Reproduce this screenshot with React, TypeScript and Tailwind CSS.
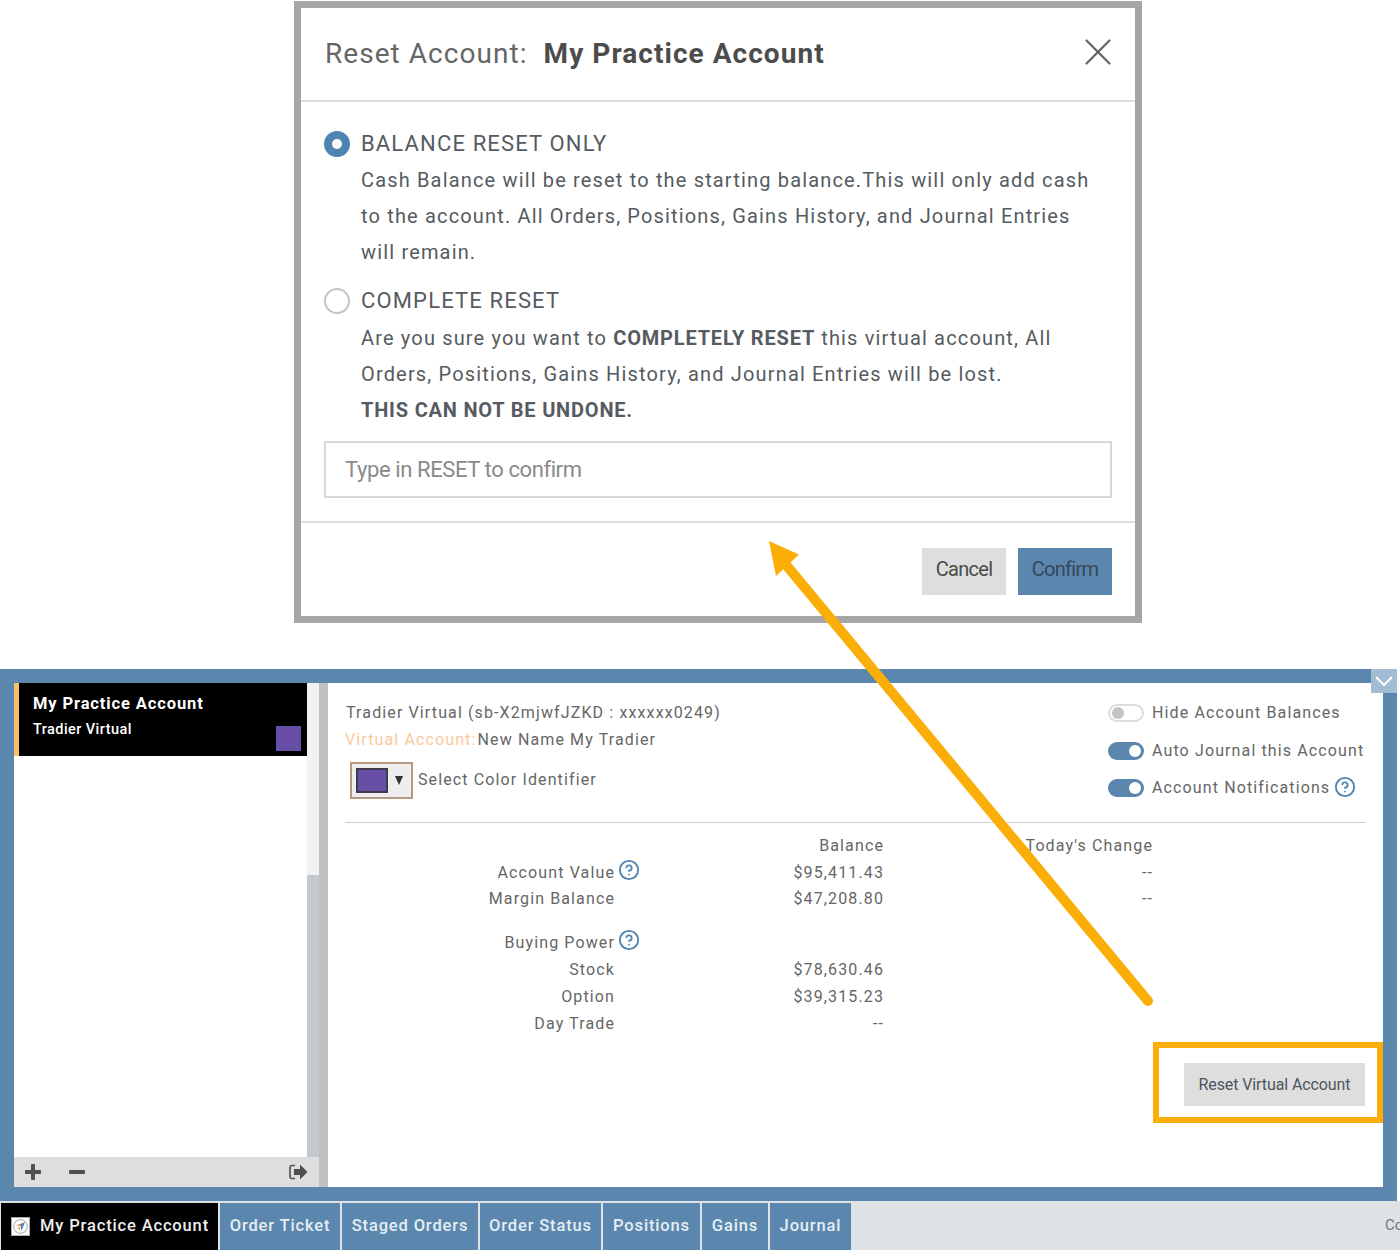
import { HelpCircle, X } from "lucide-react";

const rows = [
  { label: "Account Value", help: true, balance: "$95,411.43", change: "--", h: "h-[27px]" },
  { label: "Margin Balance", balance: "$47,208.80", change: "--", h: "h-[43px] pb-[17px]" },
  { label: "Buying Power", help: true, balance: "", change: "", h: "h-[27px]" },
  { label: "Stock", balance: "$78,630.46", change: "", h: "h-[27px]" },
  { label: "Option", balance: "$39,315.23", change: "", h: "h-[27px]" },
  { label: "Day Trade", balance: "--", change: "", h: "h-[27px]" },
];

const tabs = [
  { name: "Order Ticket", w: "w-[120px]" },
  { name: "Staged Orders", w: "w-[136px]" },
  { name: "Order Status", w: "w-[121px]" },
  { name: "Positions", w: "w-[97px]" },
  { name: "Gains", w: "w-[66px]" },
  { name: "Journal", w: "w-[81px]" },
];

function Toggle({ on }: { on: boolean }) {
  return on ? (
    <span className="flex h-[18px] w-[36px] shrink-0 items-center justify-end rounded-full bg-[#5b87ae] pr-[3px]">
      <span className="h-[12px] w-[12px] rounded-full bg-white" />
    </span>
  ) : (
    <span className="flex h-[18px] w-[36px] shrink-0 items-center rounded-full border-2 border-[#dcdcdc] bg-white pl-[2px]">
      <span className="h-[12px] w-[12px] rounded-full bg-[#c4c4c4]" />
    </span>
  );
}

function Modal() {
  return (
    <div className="ml-[294px] mt-[1px] flex h-[622px] w-[848px] flex-col border-[7px] border-[#a6a6a6] bg-white text-[#555b60]">
      <div className="flex h-[94px] shrink-0 items-center justify-between border-b-2 border-[#dcdcdc] pl-[24px] pr-[14px]">
        <div className="pb-[1px] text-[28px] tracking-[1.05px] text-[#666]">
          Reset Account:&nbsp; <span className="font-bold text-[#4c4c4c]">My Practice Account</span>
        </div>
        <X className="-mt-[4px] h-[46px] w-[46px] text-[#666]" strokeWidth={1.2} />
      </div>
      <div className="flex h-[421px] shrink-0 flex-col border-b-2 border-[#dcdcdc] px-[23px] pt-[27px]">
        <div className="flex items-center gap-[11px]">
          <span className="flex h-[26px] w-[26px] items-center justify-center rounded-full bg-[#4f83b0]">
            <span className="h-[10px] w-[10px] rounded-full bg-white" />
          </span>
          <span className="text-[22px] leading-[30px] tracking-[1.15px]">BALANCE RESET ONLY</span>
        </div>
        <p className="ml-[37px] mt-[3px] w-[735px] text-[20px] leading-[36px] tracking-[1.16px]">
          Cash Balance will be reset to the starting balance.This will only add cash to the account. All Orders,
          Positions, Gains History, and Journal Entries will remain.
        </p>
        <div className="mt-[16px] flex items-center gap-[11px]">
          <span className="h-[26px] w-[26px] rounded-full border-2 border-[#c4c4c4] bg-white" />
          <span className="text-[22px] leading-[30px] tracking-[1.15px]">COMPLETE RESET</span>
        </div>
        <p className="ml-[37px] mt-[4px] w-[735px] text-[20px] leading-[36px] tracking-[1.16px]">
          Are you sure you want to <b className="tracking-[0.8px]">COMPLETELY RESET</b> this virtual account, All
          Orders, Positions, Gains History, and Journal Entries will be lost.
          <br />
          <b className="tracking-[0.8px]">THIS CAN NOT BE UNDONE.</b>
        </p>
        <div className="mt-[13px] flex h-[57px] w-[788px] shrink-0 items-center border-2 border-[#d5d8dc] pl-[19px] text-[22px] tracking-[-0.4px] text-[#8a8a8a]">
          Type in RESET to confirm
        </div>
      </div>
      <div className="flex flex-1 items-start justify-end gap-[12px] pr-[23px] pt-[25px]">
        <div className="flex h-[47px] w-[84px] items-center justify-center bg-[#dedede] pb-[5px] text-[20px] tracking-[-0.7px] text-[#4a4a4a]">
          Cancel
        </div>
        <div className="flex h-[47px] w-[94px] items-center justify-center bg-[#5b87ae] pb-[5px] text-[20px] tracking-[-0.7px] text-[#38485a]">
          Confirm
        </div>
      </div>
    </div>
  );
}

function Sidebar() {
  return (
    <div className="flex w-[314px] shrink-0 flex-col">
      <div className="flex min-h-0 flex-1">
        <div className="flex w-[293px] flex-col bg-white">
          <div className="relative h-[73px] border-l-[5px] border-[#f6c263] bg-black pl-[14px] pt-[11px] text-white">
            <div className="text-[16.5px] font-bold leading-[20px] tracking-[0.88px]">My Practice Account</div>
            <div className="mt-[7px] text-[14.5px] font-medium leading-[18px] tracking-[0.43px]">Tradier Virtual</div>
            <span className="absolute bottom-[5px] right-[6px] h-[25px] w-[25px] bg-[#674ea7]" />
          </div>
        </div>
        <div className="flex w-[12px] flex-col bg-[#c3c8cc]">
          <div className="h-[192px] bg-[#f1f2f4]" />
        </div>
        <div className="w-[9px] bg-[#c0c0c0]" />
      </div>
      <div className="flex h-[30px] shrink-0">
        <div className="flex w-[305px] items-center bg-[#dedede] pl-[10px] pr-[11px] text-[#4f4f4f]">
          <svg width="18" height="18" viewBox="0 0 18 18" fill="#4f4f4f">
            <rect x="1" y="7" width="16" height="4" rx="1" />
            <rect x="7" y="1" width="4" height="16" rx="1" />
          </svg>
          <svg className="ml-[26px]" width="18" height="18" viewBox="0 0 18 18" fill="#4f4f4f">
            <rect x="1" y="7" width="16" height="4" rx="1" />
          </svg>
          <svg className="ml-auto" width="20" height="18" viewBox="0 0 20 18">
            <path d="M7 2.500H4a2 2 0 0 0-2 2v9a2 2 0 0 0 2 2h3" fill="none" stroke="#4f4f4f" strokeWidth="1.6" />
            <path d="M6 6h6V1.500l7.500 7.500-7.500 7.500V12H6z" fill="#4f4f4f" />
          </svg>
        </div>
        <div className="w-[9px] bg-[#c0c0c0]" />
      </div>
    </div>
  );
}

function Details() {
  return (
    <div className="relative flex min-w-0 flex-1 flex-col bg-white pl-[17px] pr-[17px] text-[16px] tracking-[1.12px] text-[#666]">
      <div className="flex h-[140px] shrink-0 justify-between border-b border-[#cfcfcf] pt-[19px]">
        <div>
          <div className="ml-[1px] leading-[22px]">Tradier Virtual (sb-X2mjwfJZKD : xxxxxx0249)</div>
          <div className="mt-[5px] leading-[22px]">
            <span className="text-[#fbc99b]">Virtual Account:</span>
            <span className="ml-[1px]">New Name My Tradier</span>
          </div>
          <div className="ml-[5px] mt-[11px] flex items-center gap-[5px]">
            <div className="flex h-[37px] w-[63px] items-center gap-[7px] border-2 border-[#b49a84] bg-[#eee] pl-[4px]">
              <span className="h-[25px] w-[32px] border-2 border-[#3d3a4a] bg-[#674ea7]" />
              <span className="h-0 w-0 border-x-[4.5px] border-t-[9px] border-x-transparent border-t-[#333]" />
            </div>
            <span className="pb-[2px]">Select Color Identifier</span>
          </div>
        </div>
        <div className="flex w-[258px] shrink-0 flex-col">
          <div className="flex items-center gap-[8px] leading-[22px]">
            <Toggle on={false} />
            <span>Hide Account Balances</span>
          </div>
          <div className="mt-[16px] flex items-center gap-[8px] leading-[22px]">
            <Toggle on />
            <span className="whitespace-nowrap">Auto Journal this Account</span>
          </div>
          <div className="mt-[15px] flex items-center gap-[8px] leading-[22px]">
            <Toggle on />
            <span>Account Notifications</span>
            <HelpCircle className="-ml-[4px] -mt-[3px] h-[22px] w-[22px] text-[#4f83b0]" strokeWidth={2} />
          </div>
        </div>
      </div>
      <div className="mt-[12px] flex h-[22px] items-center">
        <span className="w-[539px] shrink-0 text-right">Balance</span>
        <span className="w-[269px] shrink-0 text-right">Today's Change</span>
      </div>
      <div className="mt-[2px]">
        {rows.map((r) => (
          <div key={r.label} className={`flex items-center ${r.h}`}>
            <span className="relative flex w-[270px] shrink-0 items-center justify-end">
              {r.label}
              {r.help && (
                <HelpCircle
                  className="absolute -top-[2px] -right-[25px] h-[22px] w-[22px] text-[#4f83b0]"
                  strokeWidth={2}
                />
              )}
            </span>
            <span className="w-[269px] shrink-0 text-right">{r.balance || "\u00a0"}</span>
            <span className="w-[269px] shrink-0 text-right">{r.change}</span>
          </div>
        ))}
      </div>
      <div className="absolute right-0 top-[359px] flex h-[81px] w-[230px] items-center justify-end border-[6px] border-[#fbae07] pr-[12px] pt-[4px]">
        <div className="flex h-[43px] w-[181px] items-center justify-center bg-[#dedede] text-[16px] tracking-[-0.1px] text-[#4c5560]">
          Reset Virtual Account
        </div>
      </div>
    </div>
  );
}

export default function App() {
  return (
    <div className="relative h-[1250px] w-[1400px] overflow-hidden bg-white font-['Roboto',sans-serif]">
      <Modal />

      <div className="relative ml-0 mt-[46px] flex h-[532px] w-[1397px] bg-[#5b87ae] px-[14px] py-[14px]">
        <div className="flex w-full bg-white">
          <Sidebar />
          <Details />
        </div>
        <div className="absolute right-0 top-0 flex h-[24px] w-[26px] items-center justify-center bg-[#a2bcd4]">
          <svg width="20" height="12" viewBox="0 0 20 12" fill="none" stroke="#fff" strokeWidth="2">
            <path d="M2 2l8 8 8-8" />
          </svg>
        </div>
      </div>

      <div className="flex h-[49px] bg-[#dfe2e5]">
        <div className="mt-[2px] flex h-[47px] items-stretch">
          <div className="ml-[1px] flex w-[217px] items-center gap-[10px] whitespace-nowrap bg-black pl-[10px] text-[16.5px] font-medium tracking-[0.85px] text-[#eee]">
            <span className="flex h-[19px] w-[19px] items-center justify-center border border-[#aaa] bg-white">
              <svg width="15" height="15" viewBox="0 0 15 15">
                <circle cx="7.500" cy="7.500" r="6.800" fill="#fff" stroke="#bbb" strokeWidth="1.200" />
                <path d="M3 6.500L12 3 8 6.500z" fill="#e8583a" />
                <path d="M12 3L8.500 12 7.500 6.500z" fill="#2f8fc4" />
                <path d="M4.500 8l3 0-1 4z" fill="#f3b33d" />
              </svg>
            </span>
            My Practice Account
          </div>
          {tabs.map((t) => (
            <div
              key={t.name}
              className={`ml-[2px] flex ${t.w} items-center justify-center whitespace-nowrap bg-[#5b87ae] text-[16.5px] font-medium tracking-[0.85px] text-[#e6edf3]`}
            >
              {t.name}
            </div>
          ))}
        </div>
        <div className="ml-auto w-[15px] self-center overflow-hidden whitespace-nowrap text-[15px] text-[#777]">Co</div>
      </div>

      <svg className="pointer-events-none absolute left-0 top-0" width="1400" height="1250" fill="none">
        <path d="M1148 1001L782 560" stroke="#fbae07" strokeWidth="10" strokeLinecap="round" />
        <path d="M769 541l30 13.500-23 21.500z" fill="#fbae07" />
      </svg>
    </div>
  );
}
